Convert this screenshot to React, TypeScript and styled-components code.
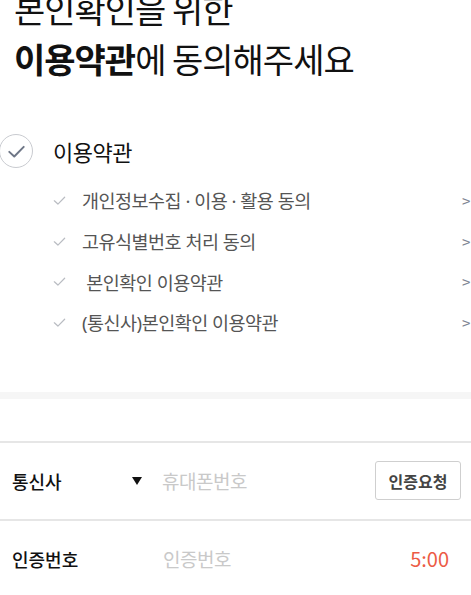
import React from 'react'
import styled, { createGlobalStyle } from 'styled-components'

const GlobalStyle = createGlobalStyle`
  html, body {
    margin: 0;
    padding: 0;
    background: #fff;
  }
  body {
    font-family: 'Noto Sans CJK KR', 'Noto Sans', sans-serif;
    color: #111;
    overflow: hidden;
  }
`

const terms = [
  '개인정보수집 · 이용 · 활용 동의',
  '고유식별번호 처리 동의',
  ' 본인확인 이용약관',
  '(통신사)본인확인 이용약관',
]

function Check({ size, color, weight }: { size: number; color: string; weight: number }) {
  return (
    <svg width={size} height={size} viewBox="0 0 16 16" fill="none">
      <path d="M2.5 8.3 L6.3 11.8 L13.5 4.5" stroke={color} strokeWidth={weight} strokeLinecap="round" strokeLinejoin="round" />
    </svg>
  )
}

export default function App() {
  return (
    <Page>
      <GlobalStyle />
      <Title>
        본인확인을 위한
        <br />
        <strong>이용약관</strong>에 동의해주세요
      </Title>

      <Agree>
        <AllRow>
          <Circle>
            <Check size={21} color="#6e7686" weight={1.5} />
          </Circle>
          <AllLabel>이용약관</AllLabel>
        </AllRow>
        <TermList>
          {terms.map((t) => (
            <TermRow key={t}>
              <Check size={15} color="#b9bcc2" weight={1.3} />
              <TermText>{t}</TermText>
              <Arrow>&gt;</Arrow>
            </TermRow>
          ))}
        </TermList>
      </Agree>

      <Band />

      <Form>
        <FormRow>
          <Label>통신사</Label>
          <Caret />
          <Placeholder>휴대폰번호</Placeholder>
          <RequestButton>인증요청</RequestButton>
        </FormRow>
        <FormRow>
          <Label>인증번호</Label>
          <Placeholder>인증번호</Placeholder>
          <Timer>5:00</Timer>
        </FormRow>
      </Form>
    </Page>
  )
}

const Page = styled.div`
  width: 471px;
  height: 595px;
  overflow: hidden;
`

const Title = styled.h1`
  margin: -16px 0 0 0;
  padding-left: 14px;
  font-size: 34px;
  font-weight: 400;
  line-height: 50px;
  letter-spacing: -1px;
  color: #111;

  strong {
    font-weight: 700;
  }
`

const Agree = styled.section`
  padding-top: 49px;
`

const AllRow = styled.div`
  display: flex;
  align-items: center;
  height: 36px;
`

const Circle = styled.div`
  width: 34px;
  height: 34px;
  margin-left: -1px;
  box-sizing: border-box;
  border: 1px solid #c9cbd0;
  border-radius: 50%;
  display: flex;
  align-items: center;
  justify-content: center;
`

const AllLabel = styled.span`
  margin-left: 20px;
  font-size: 22px;
  font-weight: 400;
  letter-spacing: -0.5px;
  color: #111;
`

const TermList = styled.ul`
  list-style: none;
  margin: 11px 0 0 0;
  padding: 0;
`

const TermRow = styled.li`
  display: flex;
  align-items: center;
  height: 40.7px;
  padding-left: 52px;
`

const TermText = styled.span`
  flex: 1;
  margin-left: 15px;
  font-family: 'Noto Sans', 'Noto Sans CJK KR', sans-serif;
  font-size: 18.5px;
  letter-spacing: -0.5px;
  color: #555;
  white-space: pre;
`

const Arrow = styled.span`
  width: 9px;
  font-size: 15px;
  color: #7d8592;
`

const Band = styled.div`
  height: 7px;
  margin-top: 49px;
  background: #f6f6f6;
`

const Form = styled.div`
  margin-top: 42px;
  border-top: 2px solid #e6e6e6;
`

const FormRow = styled.div`
  display: flex;
  align-items: center;
  height: 76px;
  padding: 0 10px 0 12px;
  border-bottom: 2px solid #e6e6e6;

  &:last-child {
    border-bottom: none;
  }
`

const Label = styled.span`
  width: 120px;
  font-size: 18px;
  font-weight: 500;
  color: #111;
`

const Caret = styled.span`
  width: 0;
  height: 0;
  margin: 0 20px 0 0;
  border-left: 5.5px solid transparent;
  border-right: 5.5px solid transparent;
  border-top: 8px solid #111;
`

const Placeholder = styled.span`
  flex: 1;
  font-size: 19px;
  letter-spacing: -0.5px;
  color: #c9c9c9;

  ${Label} + & {
    margin-left: 31px;
  }
`

const RequestButton = styled.button`
  width: 86px;
  height: 39px;
  box-sizing: border-box;
  border: 1px solid #cfcfcf;
  border-radius: 3px;
  background: #fff;
  font-family: inherit;
  font-size: 16px;
  font-weight: 700;
  color: #444;
  padding: 0;
`

const Timer = styled.span`
  margin-right: 12px;
  font-size: 20px;
  color: #ec5b45;
`
